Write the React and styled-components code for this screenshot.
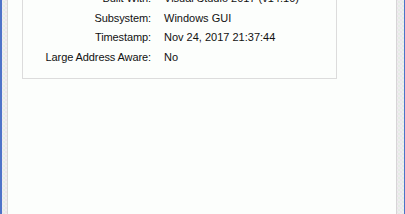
import React from 'react'
import styled, { createGlobalStyle } from 'styled-components'

const Global = createGlobalStyle`
  html, body { margin: 0; padding: 0; background: #fcfefc; }
  body { font-family: "Liberation Sans", Arial, sans-serif; }
`

const Window = styled.div`
  display: flex;
  height: 214px;
  width: 405px;
  overflow: hidden;
  border-left: 2px solid #4d72c8;
  border-right: 1px solid #4d72c8;
  box-sizing: border-box;
`

const Frame = styled.div`
  width: ${p => p.w}px;
  flex-shrink: 0;
  background-color: #eeeeef;
  background-image: radial-gradient(#d8e8d8 0.6px, transparent 0.8px),
    radial-gradient(#ead8e8 0.6px, transparent 0.8px);
  background-size: 4px 4px;
  background-position: 0 0, 2px 2px;
`

const Content = styled.div`
  flex: 1;
  background: #fcfefc;
  border-left: 1px solid #d6d6d6;
  border-right: 1px solid #d6d6d6;
  padding-left: 14px;
  overflow: hidden;
`

const Group = styled.div`
  width: 313px;
  margin-top: -40px;
  border: 1px solid #dcdcdc;
  padding: 8px 0 11px;
`

const Row = styled.div`
  display: flex;
  height: 19.5px;
  align-items: center;
  font-size: 11px;
  color: #111;
  white-space: nowrap;
`

const Label = styled.div`
  width: 128px;
  text-align: right;
  letter-spacing: -0.1px;
`

const Value = styled.div`
  padding-left: 13px;
`

const rows = [
  ['', ''],
  ['Built With:', 'Visual Studio 2017 (v14.10)'],
  ['Subsystem:', 'Windows GUI'],
  ['Timestamp:', 'Nov 24, 2017 21:37:44'],
  ['Large Address Aware:', 'No'],
]

export default function App() {
  return (
    <>
      <Global />
      <Window>
        <Frame w={5} />
        <Content>
          <Group>
            {rows.map(([l, v], i) => (
              <Row key={i}>
                <Label>{l}</Label>
                <Value>{v}</Value>
              </Row>
            ))}
          </Group>
        </Content>
        <Frame w={7} />
      </Window>
    </>
  )
}
